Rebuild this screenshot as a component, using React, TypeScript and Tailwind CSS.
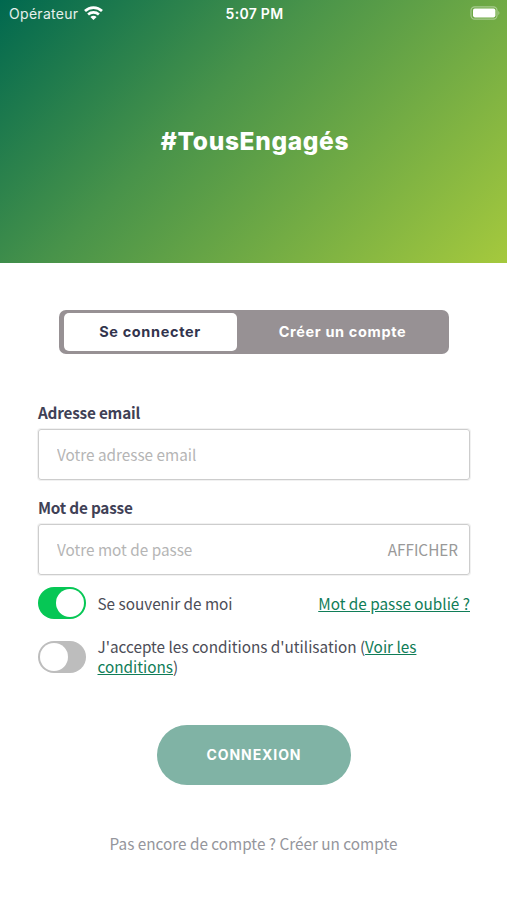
import { useState } from "react";

type FieldProps = {
  id: string;
  label: string;
  placeholder: string;
  type: string;
  action?: string;
  onAction?: () => void;
};

function Field({ id, label, placeholder, type, action, onAction }: FieldProps) {
  return (
    <div className="flex flex-col">
      <label htmlFor={id} className="h-6 leading-6 font-bold tracking-[-0.2px] text-[#3f4156]">
        {label}
      </label>
      <div className="mt-[5px] flex h-[51px] items-center rounded-[3px] border border-[#cdcdcd] pr-[11px] pl-[18px] shadow-[0_0_0_1px_#f1f1f1]">
        <input
          id={id}
          type={type}
          placeholder={placeholder}
          className="h-full min-w-0 flex-1 pb-[2px] outline-none placeholder:text-[#b5b5b5]"
        />
        {action && (
          <button type="button" onClick={onAction} className="text-[#999999]">
            {action}
          </button>
        )}
      </div>
    </div>
  );
}

type ToggleProps = {
  label: string;
  checked: boolean;
  onChange: () => void;
};

function Toggle({ label, checked, onChange }: ToggleProps) {
  return (
    <button
      type="button"
      role="switch"
      aria-label={label}
      aria-checked={checked}
      onClick={onChange}
      className={`flex h-8 w-[47.5px] shrink-0 items-center rounded-full px-[2px] ${
        checked ? "justify-end bg-[#06c755]" : "justify-start bg-[#bdbdbd]"
      }`}
    >
      <span className="size-7 rounded-full bg-white" />
    </button>
  );
}

function StatusBar() {
  return (
    <div className="grid h-[26px] grid-cols-3 items-center pr-[7px] pl-[9px] font-['Inter',sans-serif] text-white">
      <div className="flex items-center gap-[6px]">
        <span className="text-[14px] tracking-[0.3px] text-white/90">Opérateur</span>
        <svg width="19" height="14" viewBox="0 0 19 14" fill="none" stroke="currentColor">
          <path d="M1 5C5.8.4 13.2.4 18 5" strokeWidth="2.7" />
          <path d="M4.1 8.5c3-2.8 7.8-2.8 10.8 0" strokeWidth="2.6" />
          <path d="M9.5 14 6.4 11c1.8-1.6 4.4-1.6 6.2 0z" fill="currentColor" stroke="none" />
        </svg>
      </div>
      <span className="text-center text-[14px] font-semibold tracking-[0.3px]">5:07 PM</span>
      <svg width="30" height="14" viewBox="0 0 30 14" className="justify-self-end">
        <rect x="1" y=".8" width="26" height="12.4" rx="3.6" fill="none" stroke="#fff" strokeOpacity=".4" strokeWidth="1.2" />
        <rect x="3" y="2.6" width="22.4" height="8.8" rx="1.8" fill="#fff" />
        <path d="M28.3 5v4c1.5-.8 1.5-3.2 0-4z" fill="#fff" fillOpacity=".4" />
      </svg>
    </div>
  );
}

export default function App() {
  const [tab, setTab] = useState("login");
  const [showPassword, setShowPassword] = useState(false);
  const [remember, setRemember] = useState(true);
  const [accepted, setAccepted] = useState(false);

  const tabClass = (name: string) =>
    `h-[38px] rounded-[5px] text-[14.5px] font-bold tracking-[0.65px] ${
      tab === name ? "bg-white text-[#32344d]" : "text-white"
    }`;

  return (
    <div className="flex h-[900px] w-[507px] flex-col bg-white font-['Noto_Sans_CJK_SC',sans-serif] text-[15.3px] text-[#4c4d57]">
      <header className="h-[263px] bg-[linear-gradient(135deg,#00684f_0%,#48934a_40%,#a5c93d_100%)]">
        <StatusBar />
        <h1 className="mt-[97px] pl-[3px] text-center font-['Inter',sans-serif] text-[24.5px] leading-9 font-extrabold tracking-[0.65px] text-white">
          #TousEngagés
        </h1>
      </header>

      <div className="mx-auto mt-[47px] grid h-11 w-[390px] grid-cols-[173px_1fr] items-center rounded-[7px] bg-[#979194] pl-[5px] font-['Inter',sans-serif]">
        <button type="button" onClick={() => setTab("login")} className={tabClass("login")}>
          Se connecter
        </button>
        <button type="button" onClick={() => setTab("signup")} className={tabClass("signup")}>
          Créer un compte
        </button>
      </div>

      <form className="mt-[46px] flex flex-col pr-[37px] pl-[38px]" onSubmit={(e) => e.preventDefault()}>
        <Field id="email" label="Adresse email" placeholder="Votre adresse email" type="email" />
        <div className="mt-[15px]">
          <Field
            id="password"
            label="Mot de passe"
            placeholder="Votre mot de passe"
            type={showPassword ? "text" : "password"}
            action="AFFICHER"
            onAction={() => setShowPassword(!showPassword)}
          />
        </div>

        <div className="mt-3 flex h-8 items-center">
          <Toggle label="Se souvenir de moi" checked={remember} onChange={() => setRemember(!remember)} />
          <span className="ml-3">Se souvenir de moi</span>
          <a href="#" className="ml-auto text-[#107d58] underline">
            Mot de passe oublié ?
          </a>
        </div>

        <div className="mt-[18px] flex h-10 items-center">
          <Toggle label="Conditions d'utilisation" checked={accepted} onChange={() => setAccepted(!accepted)} />
          <p className="ml-3 w-[340px] pb-[2px] leading-5">
            J'accepte les conditions d'utilisation (
            <a href="#" className="text-[#107d58] underline">
              Voir les conditions
            </a>
            )
          </p>
        </div>

        <button
          type="submit"
          className="mt-12 h-[60px] w-[194px] self-center rounded-full bg-[#80b3a5] pb-[2px] font-['Inter',sans-serif] text-[14px] font-bold tracking-[0.9px] text-white"
        >
          CONNEXION
        </button>
      </form>

      <p className="mt-[46px] text-center leading-6 text-[#95969c]">Pas encore de compte ? Créer un compte</p>
    </div>
  );
}
